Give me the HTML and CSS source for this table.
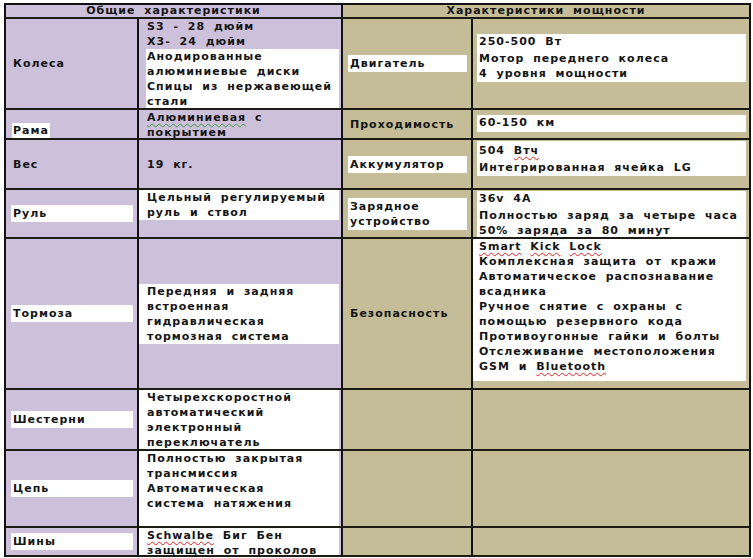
FILE: index.html
```html
<!DOCTYPE html>
<html lang="ru">
<head>
<meta charset="utf-8">
<title>Характеристики</title>
<link rel="stylesheet" href="styles.css">
</head>
<body>
<div class="sheet">
  <div class="c lav hd span2">Общие характеристики</div>
  <div class="c tan hd span2">Характеристики мощности</div>

  <div class="c lav mid"><p class="lbl">Колеса</p></div>
  <div class="c lav top">
    <p class="pl">S3 - 28 дюйм</p>
    <p class="pl">X3- 24 дюйм</p>
    <div class="box indent">
      <p>Анодированные</p>
      <p>алюминиевые диски</p>
      <p>Спицы из нержавеющей</p>
      <p>стали</p>
    </div>
  </div>
  <div class="c tan mid"><p class="lblbox">Двигатель</p></div>
  <div class="c tan mid shift">
    <div class="rbox">
      <p class="gap">250-500 Вт</p>
      <p>Мотор переднего колеса</p>
      <p>4 уровня мощности</p>
    </div>
  </div>

  <div class="c lav bottom"><p class="lbl"><span class="hl">Рама</span></p></div>
  <div class="c lav top">
    <p class="pl"><span class="sq-g">Алюминиевая</span> с</p>
    <p class="pl">покрытием</p>
  </div>
  <div class="c tan mid"><p class="lbl">Проходимость</p></div>
  <div class="c tan top">
    <div class="rbox short"><p>60-150 км</p></div>
  </div>

  <div class="c lav mid"><p class="lbl">Вес</p></div>
  <div class="c lav mid"><p class="pl">19 кг.</p></div>
  <div class="c tan mid"><p class="lblbox">Аккумулятор</p></div>
  <div class="c tan top">
    <div class="rbox acc">
      <p class="gap">504 <span class="sq">Втч</span></p>
      <p>Интегрированная ячейка LG</p>
    </div>
  </div>

  <div class="c lav mid"><p class="lblbox">Руль</p></div>
  <div class="c lav top">
    <div class="box">
      <p>Цельный регулируемый</p>
      <p>руль и ствол</p>
    </div>
  </div>
  <div class="c tan mid"><div class="lblbox"><p>Зарядное</p><p>устройство</p></div></div>
  <div class="c tan fill">
    <div class="rbox grow">
      <p class="gap">36v 4A</p>
      <p>Полностью заряд за четыре часа</p>
      <p>50% заряда за 80 минут</p>
    </div>
  </div>

  <div class="c lav mid"><p class="lblbox">Тормоза</p></div>
  <div class="c lav mid">
    <div class="box pad">
      <p>Передняя и задняя</p>
      <p>встроенная</p>
      <p>гидравлическая</p>
      <p>тормозная система</p>
    </div>
  </div>
  <div class="c tan mid"><p class="lbl">Безопасность</p></div>
  <div class="c tan top">
    <div class="rbox flush">
      <p><span class="sq">Smart</span> <span class="sq">Kick</span> <span class="sq">Lock</span></p>
      <p>Комплексная защита от кражи</p>
      <p>Автоматическое распознавание</p>
      <p>всадника</p>
      <p>Ручное снятие с охраны с</p>
      <p>помощью резервного кода</p>
      <p>Противоугонные гайки и болты</p>
      <p>Отслеживание местоположения</p>
      <p>GSM и <span class="sq">Bluetooth</span></p>
    </div>
  </div>

  <div class="c lav mid"><p class="lblbox">Шестерни</p></div>
  <div class="c lav fill">
    <div class="box grow">
      <p>Четырехскоростной</p>
      <p>автоматический</p>
      <p>электронный</p>
      <p>переключатель</p>
    </div>
  </div>
  <div class="c tan"></div>
  <div class="c tan"></div>

  <div class="c lav mid"><p class="lblbox">Цепь</p></div>
  <div class="c lav fill">
    <div class="box grow">
      <p>Полностью закрытая</p>
      <p>трансмиссия</p>
      <p>Автоматическая</p>
      <p>система натяжения</p>
    </div>
  </div>
  <div class="c tan"></div>
  <div class="c tan"></div>

  <div class="c lav mid"><p class="lblbox">Шины</p></div>
  <div class="c lav fill">
    <div class="box grow">
      <p><span class="sq">Schwalbe</span> Биг Бен</p>
      <p>защищен от проколов</p>
    </div>
  </div>
  <div class="c tan"></div>
  <div class="c tan"></div>
</div>
</body>
</html>
```

FILE: styles.css
```css
html, body {
  margin: 0;
  padding: 0;
  background: #ffffff;
}

body {
  font-family: "DejaVu Sans", sans-serif;
  font-size: 11px;
  font-weight: bold;
  color: #151515;
  letter-spacing: 1px;
  word-spacing: 4px;
}

p {
  margin: 0;
  line-height: 15px;
  white-space: nowrap;
}

.sheet {
  display: grid;
  grid-template-columns: 133px 204px 130px 278px;
  grid-template-rows: 14px 91px 30px 50px 49px 151px 61px 77px 29px;
  margin: 3px 0 0 4px;
  width: max-content;
  border-left: 2px solid #111;
  border-top: 2px solid #111;
  box-shadow: 0 1px 0 #bdbdbd;
}

.c {
  box-sizing: border-box;
  border-right: 2px solid #111;
  border-bottom: 2px solid #1c1c14;
  display: flex;
  flex-direction: column;
  overflow: hidden;
}

.lav { background: #ccc0da; }
.tan { background: #c4bd97; }

.span2 { grid-column: span 2; }

.hd {
  align-items: center;
  justify-content: center;
  line-height: 12px;
  font-size: 11px;
}

.mid { justify-content: center; }
.top { justify-content: flex-start; }
.bottom { justify-content: flex-end; }
.fill { justify-content: stretch; }

.lbl {
  padding-left: 7px;
}

.lbl .hl {
  background: #ffffff;
  padding: 0 1px;
  margin-left: -1px;
  display: inline-block;
}

.lblbox {
  background: #ffffff;
  margin: 0 4px 0 5px;
  padding: 1px 2px;
}

.pl {
  padding-left: 8px;
}

.box {
  background: #ffffff;
  margin-right: 2px;
  padding-left: 8px;
}

.box.indent {
  margin-left: 7px;
  padding-left: 1px;
}

.grow {
  flex: 1;
}

.shift {
  padding-bottom: 13px;
}

.rbox {
  background: #ffffff;
  margin: 1px 3px 0 4px;
  padding: 0 0 1px 2px;
}

.rbox.acc {
  padding-top: 2px;
}

.rbox.short {
  margin-top: 5px;
  height: 17px;
  box-sizing: border-box;
}

.rbox.flush {
  margin: 0 3px 0 0;
  padding: 0 0 7px 6px;
}

.gap {
  margin-bottom: 2px;
}

.sq {
  text-decoration: underline wavy #e02020;
  text-decoration-thickness: 1px;
  text-underline-offset: 2px;
}

.sq-g {
  text-decoration: underline wavy #3a9a3a;
  text-decoration-thickness: 1px;
  text-underline-offset: 2px;
}
```
